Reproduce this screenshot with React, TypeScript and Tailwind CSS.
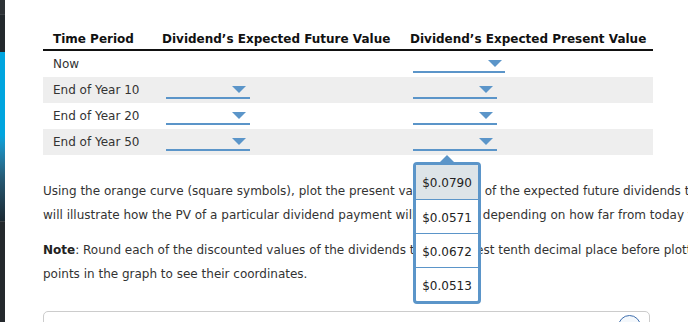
import React from "react";

const Select = ({ wide = false }: { wide?: boolean }) => (
  <div
    className={`relative h-[16px] border-b-2 border-[#5b95c9] ${wide ? "w-[92px]" : "w-[84px]"}`}
  >
    <span
      className={`absolute top-[3px] ${wide ? "right-[3px]" : "right-[4px]"} w-0 h-0 border-l-[7px] border-r-[7px] border-t-[7px] border-l-transparent border-r-transparent border-t-[#5b95c9]`}
    />
  </div>
);

const App = () => {
  const rows = [
    { label: "Now", future: false, wide: true, shaded: false },
    { label: "End of Year 10", future: true, wide: false, shaded: true },
    { label: "End of Year 20", future: true, wide: false, shaded: false },
    { label: "End of Year 50", future: true, wide: false, shaded: true },
  ];

  const options = ["$0.0790", "$0.0571", "$0.0672", "$0.0513"];

  return (
    <div
      className="relative flex w-[688px] h-[322px] overflow-hidden bg-white text-[12px] text-[#333]"
      style={{ fontFamily: '"DejaVu Sans", Verdana, sans-serif' }}
    >
      {/* sidebar edge */}
      <div className="flex flex-col w-[5px] shrink-0">
        <div className="h-[14px] bg-[#2d3236]" />
        <div className="h-px bg-[#3d4246]" />
        <div className="h-[37px] bg-[#23292d]" />
        <div className="h-[83px] bg-[#00a5df]" />
        <div className="h-[86px] bg-gradient-to-b from-[#00a5df] via-[#265a74] to-[#1b2a34]" />
        <div className="h-px bg-[#3d4246]" />
        <div className="flex-1 bg-[#24292d]" />
      </div>

      <div className="flex-1 pl-[38px] pt-[29px]">
        {/* table */}
        <div className="w-[610px]">
          <div className="grid grid-cols-[119px_248px_1fr] h-[22px] items-center border-b-2 border-[#111] font-bold text-[#111]">
            <div className="pl-[10px]">Time Period</div>
            <div>Dividend’s Expected Future Value</div>
            <div>Dividend’s Expected Present Value</div>
          </div>
          {rows.map((row, i) => (
            <div
              key={i}
              className={`grid grid-cols-[119px_248px_1fr] h-[26px] items-center ${row.shaded ? "bg-[#eeeeee]" : ""}`}
            >
              <div className="pl-[10px]">{row.label}</div>
              <div className="pl-[4px] pt-[2px]">{row.future && <Select />}</div>
              <div className="pl-[3px] pt-[2px]">
                <Select wide={row.wide} />
              </div>
            </div>
          ))}
        </div>

        {/* instructions */}
        <div className="mt-[24px] leading-[24px] whitespace-nowrap">
          <div>
            Using the orange curve (square symbols), plot the present va
            <span className="inline-block w-[68px] overflow-hidden align-top">lue (PV)</span> of the expected future dividends that you computed in the previous table. The resulting curve
          </div>
          <div>
            will illustrate how the PV of a particular dividend payment wil
            <span className="inline-block w-[67px] overflow-hidden align-top">l change</span> depending on how far from today the dividend is expected to be received.
          </div>
        </div>
        <div className="mt-[11px] leading-[24px] whitespace-nowrap">
          <div>
            <span className="font-bold text-[#222]">Note</span>: Round each of the discounted values of the dividends to the nearest tenth decimal place before plotting. You can hover over the
          </div>
          <div>points in the graph to see their coordinates.</div>
        </div>

        {/* graph card */}
        <div className="relative mt-[25px] w-[607px] h-[40px] rounded-[5px] border border-[#cccccc]">
          <div className="absolute left-[574px] top-[3px] w-[23px] h-[23px] rounded-full border-[1.5px] border-[#3f6fae] bg-[#f4f8fc]" />
        </div>
      </div>

      {/* open dropdown */}
      <div className="absolute left-[413px] top-[162px] w-[68px]">
        <span className="absolute left-[27px] -top-[7px] w-0 h-0 border-l-[7px] border-r-[7px] border-b-[7px] border-l-transparent border-r-transparent border-b-[#5b95c9]" />
        <div className="rounded-[4px] border-[3px] border-[#5b95c9] bg-white overflow-hidden">
          {options.map((opt, i) => (
            <div
              key={opt}
              className={`h-[34px] flex items-center justify-center pt-[2px] text-[#222] ${i > 0 ? "border-t border-[#5b95c9]" : ""} ${i === 0 ? "bg-[#dde4e8]" : ""}`}
            >
              {opt}
            </div>
          ))}
        </div>
      </div>
    </div>
  );
};

export default App;
